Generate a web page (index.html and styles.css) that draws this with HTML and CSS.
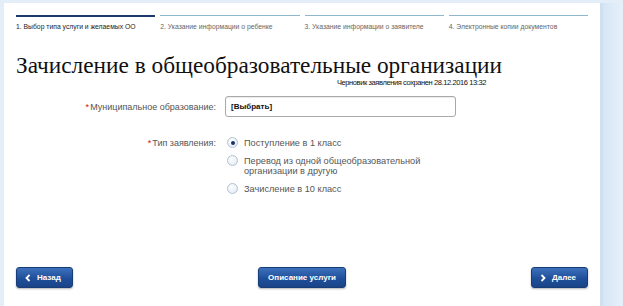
FILE: index.html
```html
<!DOCTYPE html>
<html lang="ru">
<head>
<meta charset="utf-8">
<link rel="stylesheet" href="styles.css">
</head>
<body>
<div class="frame">
  <div class="panel">
    <ol class="steps">
      <li class="step active">1. Выбор типа услуги и желаемых ОО</li>
      <li class="step">2. Указание информации о ребенке</li>
      <li class="step">3. Указание информации о заявителе</li>
      <li class="step">4. Электронные копии документов</li>
    </ol>
    <h1 class="title">Зачисление в общеобразовательные организации</h1>
    <div class="draft">Черновик заявления сохранен 28.12.2016 13:32</div>
    <div class="form">
      <div class="row">
        <label class="label"><span class="req">*</span>Муниципальное образование:</label>
        <div class="select">[Выбрать]</div>
      </div>
      <div class="row row-radio">
        <label class="label"><span class="req">*</span>Тип заявления:</label>
        <div class="radios">
          <div class="radio"><span class="dot checked"></span><span class="rtext">Поступление в 1 класс</span></div>
          <div class="radio"><span class="dot"></span><span class="rtext">Перевод из одной общеобразовательной<br>организации в другую</span></div>
          <div class="radio"><span class="dot"></span><span class="rtext">Зачисление в 10 класс</span></div>
        </div>
      </div>
    </div>
    <div class="buttons">
      <button class="btn btn-back"><svg width="6" height="8" viewBox="0 0 6 8"><path d="M4.5 1 L1.5 4 L4.5 7" fill="none" stroke="#fff" stroke-width="1.8"/></svg>Назад</button>
      <button class="btn btn-desc">Описание услуги</button>
      <button class="btn btn-next"><svg width="6" height="8" viewBox="0 0 6 8"><path d="M1.5 1 L4.5 4 L1.5 7" fill="none" stroke="#fff" stroke-width="1.8"/></svg>Далее</button>
    </div>
  </div>
  <div class="side"></div>
</div>
</body>
</html>
```
FILE: styles.css
```css
html, body {
  margin: 0;
  padding: 0;
}
body {
  width: 623px;
  height: 306px;
  overflow: hidden;
  background: #e3eef8;
  font-family: "Liberation Sans", Arial, sans-serif;
}
.frame {
  display: flex;
  height: 306px;
  padding: 3px 0 0 4px;
  box-sizing: border-box;
}
.panel {
  width: 599px;
  background: #fff;
  border-right: 3px solid #cfe0ef;
  box-sizing: border-box;
  padding: 0 12px 0 12px;
  display: flex;
  flex-direction: column;
}
.side {
  flex: 1;
  background: linear-gradient(to right, #d6e6f5, #e6f0fa);
}
.steps {
  list-style: none;
  margin: 12px 0 0 0;
  padding: 0;
  display: flex;
  gap: 5px;
}
.step {
  width: 140px;
  border-top: 1px solid #8fb7cf;
  padding-top: 7px;
  font-size: 6.8px;
  line-height: 8px;
  color: #666;
  white-space: nowrap;
}
.step.active {
  border-top: 2px solid #1a3a6b;
  padding-top: 6px;
  color: #222;
}
.title {
  font-family: "Liberation Serif", "DejaVu Serif", "Times New Roman", serif;
  font-weight: normal;
  font-size: 23.3px;
  color: #111;
  margin: 22px 0 0 0;
  line-height: 24px;
  white-space: nowrap;
}
.draft {
  align-self: flex-end;
  margin-right: 102px;
  margin-top: 1px;
  font-size: 7.5px;
  letter-spacing: -0.4px;
  color: #111;
  line-height: 9px;
}
.form {
  margin-top: 9px;
  display: flex;
  flex-direction: column;
}
.row {
  display: flex;
  align-items: center;
}
.label {
  width: 209px;
  text-align: right;
  font-size: 9px;
  color: #555;
  padding-right: 9px;
  box-sizing: border-box;
  flex: none;
}
.req {
  color: #d01010;
  margin-right: 1px;
}
.select {
  width: 231px;
  height: 21px;
  box-sizing: border-box;
  border: 1px solid #a9a9a9;
  border-radius: 3px;
  font-size: 8px;
  font-weight: bold;
  color: #111;
  padding: 0 0 0 5px;
  line-height: 19px;
  box-shadow: inset 0 1px 1px rgba(0,0,0,0.08);
}
.row-radio {
  align-items: flex-start;
  margin-top: 20px;
}
.row-radio .label {
  line-height: 12px;
}
.radios {
  display: flex;
  flex-direction: column;
  gap: 7px;
  padding-left: 2px;
}
.radio {
  display: flex;
  align-items: flex-start;
  font-size: 9.2px;
  color: #555;
  line-height: 10px;
  gap: 6px;
}
.rtext {
  padding-top: 1px;
}
.dot {
  width: 11px;
  height: 11px;
  border: 1px solid #b3c3d4;
  border-radius: 50%;
  background: radial-gradient(circle at 40% 35%, #ffffff, #dce7f2);
  box-sizing: border-box;
  position: relative;
  flex: none;
}
.dot.checked::after {
  content: "";
  position: absolute;
  width: 4px;
  height: 4px;
  border-radius: 50%;
  background: #1a3365;
  left: 2.5px;
  top: 2.5px;
}
.buttons {
  margin-top: auto;
  margin-bottom: 18px;
  display: flex;
  justify-content: space-between;
  align-items: center;
}
.btn {
  height: 21px;
  border: 1px solid #173d78;
  border-radius: 3px;
  background: linear-gradient(to bottom, #3d70bb, #1f4f9b 55%, #1a4486);
  color: #fff;
  font-family: "Liberation Sans", Arial, sans-serif;
  font-weight: bold;
  font-size: 8px;
  display: flex;
  align-items: center;
  gap: 6px;
  padding: 0 10px;
  white-space: nowrap;
  box-shadow: 0 1px 2px rgba(0,0,0,0.3);
}
.btn-back { width: 57px; padding-left: 8px; }
.btn-desc { width: 88px; justify-content: center; padding: 0 4px; }
.btn-next { width: 57px; padding-left: 8px; }
```
